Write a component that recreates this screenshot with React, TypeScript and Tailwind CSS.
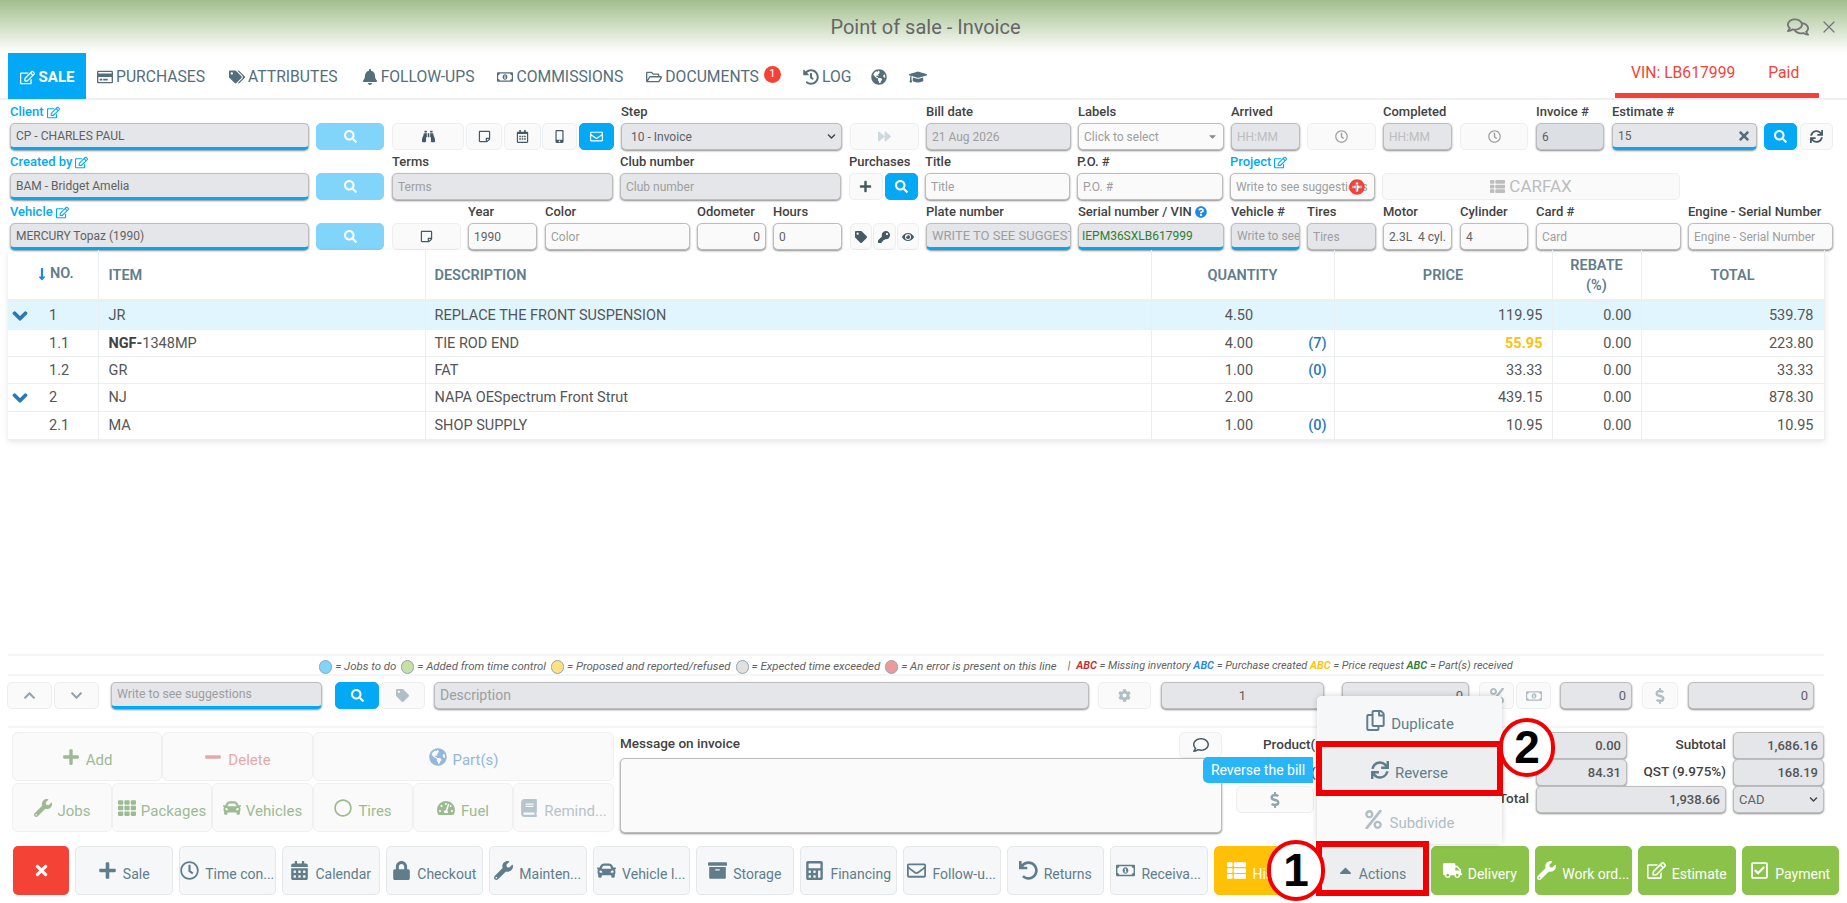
import React from "react";
import { X } from "lucide-react";
import {
  FaRegEdit, FaRegCreditCard, FaTags, FaBell, FaRegMoneyBillAlt, FaRegFolderOpen, FaHistory, FaGlobeAmericas, FaGraduationCap,
  FaSearch, FaBinoculars, FaRegStickyNote, FaRegCalendarAlt, FaMobileAlt, FaRegEnvelope, FaForward, FaRegClock, FaTimes, FaSync,
  FaPlus, FaTag, FaKey, FaEye, FaQuestionCircle, FaPlusCircle, FaChevronDown, FaChevronUp, FaCog, FaPercent, FaDollarSign,
  FaRegComment, FaRegComments, FaMinus, FaWrench, FaTh, FaCar, FaRegCircle, FaTachometerAlt, FaBook, FaLock, FaArchive, FaCalculator,
  FaUndo, FaTruck, FaRegCheckSquare, FaCaretUp, FaRegCopy, FaThList, FaCaretDown, FaLongArrowAltDown, FaCalendarAlt,
} from "react-icons/fa";

const base = "h-[27px] rounded-[5px] border border-[#bdbdbd] shadow-[0_1px_2px_rgba(0,0,0,0.45)] px-[5px] text-[12px] flex items-center overflow-hidden whitespace-nowrap";
const gray = base + " bg-[#e4e6e9]";
const white = base + " bg-[#fafafa]";
const blueLine = " border-b-[3px] border-b-[#03a9f4]";
const hint = "text-[#9e9e9e]";
const val = "text-[#616161]";

function Cell({ w, ml, label, blue, edit, children }: { w: string; ml?: string; label?: React.ReactNode; blue?: boolean; edit?: boolean; children: React.ReactNode }) {
  return (
    <div className={`flex flex-col shrink-0 ${w} ${ml ?? ""}`}>
      <div className={`h-[20px] pb-[2px] flex items-center gap-[3px] whitespace-nowrap text-[13px] font-medium ${blue ? "text-[#03a9f4]" : "text-[#424242]"}`}>
        {label}
        {edit && <FaRegEdit className="text-[13px]" />}
      </div>
      {children}
    </div>
  );
}

function Btn({ className, children }: { className?: string; children?: React.ReactNode }) {
  return (
    <div className={`h-[27px] rounded-[5px] border border-[#eceff1] bg-[#fafafa] flex items-center justify-center text-[#455a64] text-[13px] ${className ?? ""}`}>
      {children}
    </div>
  );
}

const lightSearch = "!bg-[#81d4fa] !border-[#81d4fa] !text-white";
const blueBtn = "!bg-[#03a9f4] !border-[#03a9f4] !text-white";

function Tab({ icon, text, className }: { icon: React.ReactNode; text: string; className?: string }) {
  return (
    <div className={`flex items-center gap-[3px] pt-[3px] text-[15.7px] text-[#546e7a] whitespace-nowrap ${className ?? ""}`}>
      <span className="text-[16px]">{icon}</span>
      {text}
    </div>
  );
}

const rows = [
  { no: "1", chev: true, item: <>JR</>, desc: "REPLACE THE FRONT SUSPENSION", qty: "4.50", badge: "", price: "119.95", total: "539.78", h: "h-[29px]", bg: "bg-[#e1f5fe]" },
  { no: "1.1", item: <><b className="font-bold text-[#424242]">NGF-</b>1348MP</>, desc: "TIE ROD END", qty: "4.00", badge: "(7)", price: "55.95", total: "223.80", h: "h-[27px]", yellow: true },
  { no: "1.2", item: <>GR</>, desc: "FAT", qty: "1.00", badge: "(0)", price: "33.33", total: "33.33", h: "h-[27px]" },
  { no: "2", chev: true, item: <>NJ</>, desc: "NAPA OESpectrum Front Strut", qty: "2.00", badge: "", price: "439.15", total: "878.30", h: "h-[28px]" },
  { no: "2.1", item: <>MA</>, desc: "SHOP SUPPLY", qty: "1.00", badge: "(0)", price: "10.95", total: "10.95", h: "h-[28px]" },
];

const th = "border-r border-[#eceff1] pt-[3px] text-[14.5px] font-semibold text-[#607d8b] uppercase";
const td = "border-r border-[#eceff1] pt-[2px] text-[14.5px] text-[#555]";

function Legend({ c, t }: { c: string; t: string }) {
  return (
    <span className="inline-flex items-center gap-[3px] mr-[5px] text-[11.4px]">
      <span className={`w-[13px] h-[14px] rounded-full border border-[#90a4ae] ${c}`} />
      <span>{t}</span>
    </span>
  );
}

function Tool({ className, icon, text, tc }: { className: string; icon: React.ReactNode; text: string; tc: string }) {
  return (
    <div className={`h-[49px] pt-[8px] rounded-[6px] border border-[#f0f0f0] bg-[#fafafa] flex items-center justify-center gap-[6px] text-[15px] whitespace-nowrap ${className} ${tc}`}>
      <span className="text-[18px] -mt-[8px]">{icon}</span>
      {text}
    </div>
  );
}

function Bar({ icon, text, className }: { icon: React.ReactNode; text: string; className?: string }) {
  return (
    <div className={`w-[97.5px] h-[49px] pt-[8px] shrink-0 rounded-[5px] border flex items-center justify-center gap-[6px] text-[14px] whitespace-nowrap overflow-hidden ${className ?? "border-[#e3e8eb] bg-[#f5f7f8] text-[#607d8b]"}`}>
      <span className="text-[19px] -mt-[8px]">{icon}</span>
      {text}
    </div>
  );
}

const green = "border-[#8bc34a] bg-[#8bc34a] text-white";
const right = "justify-end font-medium text-[13px] text-[#555]";

export default function App() {
  return (
    <div className="relative w-[1847px] h-[903px] overflow-hidden bg-white flex flex-col font-[Roboto,sans-serif]">
      {/* Title */}
      <header className="h-[53px] shrink-0 bg-linear-to-b from-[#a3bf8c] to-white grid grid-cols-[1fr_auto_1fr] items-center">
        <div />
        <h1 className="text-[20px] text-[#666] font-normal pl-[4px]">Point of sale - Invoice</h1>
        <div className="flex items-center justify-end gap-[10px] pr-[8px] text-[#757575]">
          <FaRegComments className="text-[22px]" />
          <X size={20} strokeWidth={1.5} />
        </div>
      </header>

      {/* Tabs */}
      <nav className="h-[47px] shrink-0 flex border-b-2 border-[#f0f0f0] pl-[8px]">
        <div className="w-[78px] h-[46px] pt-[3px] bg-[#03a9f4] text-white font-bold text-[15px] flex items-center justify-center gap-[4px]">
          <FaRegEdit className="text-[15px]" /> SALE
        </div>
        <Tab className="ml-[11px]" icon={<FaRegCreditCard />} text="PURCHASES" />
        <Tab className="ml-[24px]" icon={<FaTags />} text="ATTRIBUTES" />
        <Tab className="ml-[24px]" icon={<FaBell />} text="FOLLOW-UPS" />
        <Tab className="ml-[23px]" icon={<FaRegMoneyBillAlt />} text="COMMISSIONS" />
        <Tab className="ml-[23px]" icon={<FaRegFolderOpen />} text="DOCUMENTS" />
        <span className="ml-[5px] mt-[13px] w-[17px] h-[17px] rounded-full bg-[#f44336] text-white text-[11px] flex items-center justify-center">1</span>
        <Tab className="ml-[22px]" icon={<FaHistory />} text="LOG" />
        <Tab className="ml-[20px]" icon={<FaGlobeAmericas />} text="" />
        <Tab className="ml-[22px]" icon={<FaGraduationCap className="text-[18px]" />} text="" />
        <div className="ml-auto mr-[28px] w-[204px] h-[45px] border-b-[5px] border-[#f44336] flex items-center text-[15.7px] text-[#f44336] pl-[16px] gap-[33px]">
          <span>VIN: LB617999</span>
          <span>Paid</span>
        </div>
      </nav>

      {/* Form */}
      <section className="shrink-0 pl-[10px] pt-[3px] flex flex-col gap-[3px]">
        <div className="flex">
          <Cell w="w-[299px]" label="Client" blue edit><div className={gray + blueLine + " " + val}>CP - CHARLES PAUL</div></Cell>
          <Cell w="w-[68px]" ml="ml-[7px]"><Btn className={lightSearch}><FaSearch /></Btn></Cell>
          <Cell w="w-[72px]" ml="ml-[8px]"><Btn><FaBinoculars /></Btn></Cell>
          <Cell w="w-[36px]" ml="ml-[2px]"><Btn><FaRegStickyNote /></Btn></Cell>
          <Cell w="w-[37px]" ml="ml-[2px]"><Btn><FaRegCalendarAlt /></Btn></Cell>
          <Cell w="w-[35px]" ml="ml-[1px]"><Btn><FaMobileAlt /></Btn></Cell>
          <Cell w="w-[35px]" ml="ml-[2px]"><Btn className={blueBtn}><FaRegEnvelope /></Btn></Cell>
          <Cell w="w-[221px]" ml="ml-[7px]" label="Step"><div className={gray + " justify-between pl-[9px] " + val}>10 - Invoice<FaChevronDown className="text-[9px] text-[#444]" /></div></Cell>
          <Cell w="w-[69px]" ml="ml-[8px]"><Btn className="!text-[#cfd8dc]"><FaForward /></Btn></Cell>
          <Cell w="w-[145px]" ml="ml-[7px]" label="Bill date"><div className={gray + " " + hint}>21 Aug 2026</div></Cell>
          <Cell w="w-[146px]" ml="ml-[7px]" label="Labels"><div className={white + " justify-between " + hint}>Click to select<FaCaretDown className="text-[11px] text-[#888]" /></div></Cell>
          <Cell w="w-[69px]" ml="ml-[7px]" label="Arrived"><div className={gray + " text-[#bdbdbd]"}>HH:MM</div></Cell>
          <Cell w="w-[69px]" ml="ml-[7px]"><Btn className="!text-[#9e9e9e]"><FaRegClock /></Btn></Cell>
          <Cell w="w-[69px]" ml="ml-[7px]" label="Completed"><div className={gray + " text-[#bdbdbd]"}>HH:MM</div></Cell>
          <Cell w="w-[68px]" ml="ml-[8px]"><Btn className="!text-[#9e9e9e]"><FaRegClock /></Btn></Cell>
          <Cell w="w-[68px]" ml="ml-[8px]" label="Invoice #"><div className={base + " bg-[#dcdfe3] " + val}>6</div></Cell>
          <Cell w="w-[145px]" ml="ml-[8px]" label="Estimate #"><div className={gray + blueLine + " justify-between " + val}>15<FaTimes className="text-[14px] text-[#546e7a]" /></div></Cell>
          <Cell w="w-[33px]" ml="ml-[7px]"><Btn className={blueBtn}><FaSearch /></Btn></Cell>
          <Cell w="w-[33px]" ml="ml-[3px]"><Btn><FaSync /></Btn></Cell>
        </div>

        <div className="flex">
          <Cell w="w-[299px]" label="Created by" blue edit><div className={gray + blueLine + " " + val}>BAM - Bridget Amelia</div></Cell>
          <Cell w="w-[68px]" ml="ml-[7px]"><Btn className={lightSearch}><FaSearch /></Btn></Cell>
          <Cell w="w-[221px]" ml="ml-[8px]" label="Terms"><div className={gray + " " + hint}>Terms</div></Cell>
          <Cell w="w-[221px]" ml="ml-[7px]" label="Club number"><div className={gray + " " + hint}>Club number</div></Cell>
          <Cell w="w-[69px]" ml="ml-[8px]" label="Purchases">
            <div className="flex gap-[2px]"><Btn className="flex-1"><FaPlus /></Btn><Btn className={"flex-1 " + blueBtn}><FaSearch /></Btn></div>
          </Cell>
          <Cell w="w-[145px]" ml="ml-[7px]" label="Title"><div className={white + " " + hint}>Title</div></Cell>
          <Cell w="w-[146px]" ml="ml-[7px]" label="P.O. #"><div className={white + " " + hint}>P.O. #</div></Cell>
          <Cell w="w-[145px]" ml="ml-[7px]" label="Project" blue edit>
            <div className={white + " relative " + hint}>Write to see suggestions
              <FaPlusCircle className="absolute right-[9px] top-[5px] text-[16px] text-[#f44336]" />
            </div>
          </Cell>
          <Cell w="w-[298px]" ml="ml-[7px]"><Btn className="!text-[#bdbdbd] gap-[4px] !text-[17px]"><FaThList className="text-[15px]" />CARFAX</Btn></Cell>
        </div>

        <div className="flex">
          <Cell w="w-[299px]" label="Vehicle" blue edit><div className={gray + blueLine + " " + val}>MERCURY Topaz (1990)</div></Cell>
          <Cell w="w-[68px]" ml="ml-[7px]"><Btn className={lightSearch}><FaSearch /></Btn></Cell>
          <Cell w="w-[69px]" ml="ml-[8px]"><Btn><FaRegStickyNote /></Btn></Cell>
          <Cell w="w-[69px]" ml="ml-[7px]" label="Year"><div className={white + " " + val}>1990</div></Cell>
          <Cell w="w-[145px]" ml="ml-[8px]" label="Color"><div className={white + " " + hint}>Color</div></Cell>
          <Cell w="w-[69px]" ml="ml-[7px]" label="Odometer"><div className={white + " justify-end " + val}>0</div></Cell>
          <Cell w="w-[69px]" ml="ml-[7px]" label="Hours"><div className={white + " " + val}>0</div></Cell>
          <Cell w="w-[69px]" ml="ml-[8px]">
            <div className="flex gap-[1px]">
              <Btn className="flex-1 !text-[12px]"><FaTag /></Btn>
              <Btn className="flex-1 !text-[12px]"><FaKey /></Btn>
              <Btn className="flex-1 !text-[12px]"><FaEye /></Btn>
            </div>
          </Cell>
          <Cell w="w-[145px]" ml="ml-[7px]" label="Plate number"><div className={gray + blueLine + " !text-[13px] " + hint}>WRITE TO SEE SUGGESTIONS</div></Cell>
          <Cell w="w-[146px]" ml="ml-[7px]" label={<>Serial number / VIN <FaQuestionCircle className="text-[12px] text-[#1e88e5]" /></>}><div className={gray + blueLine + " text-[#2e7d32] !px-[3px]"}>IEPM36SXLB617999</div></Cell>
          <Cell w="w-[69px]" ml="ml-[7px]" label="Vehicle #"><div className={gray + blueLine + " " + hint}>Write to see suggestions</div></Cell>
          <Cell w="w-[69px]" ml="ml-[7px]" label="Tires"><div className={gray + " " + hint}>Tires</div></Cell>
          <Cell w="w-[69px]" ml="ml-[7px]" label="Motor"><div className={white + " " + val}>2.3L&nbsp; 4 cyl.</div></Cell>
          <Cell w="w-[68px]" ml="ml-[8px]" label="Cylinder"><div className={white + " " + val}>4</div></Cell>
          <Cell w="w-[145px]" ml="ml-[8px]" label="Card #"><div className={white + " " + hint}>Card</div></Cell>
          <Cell w="w-[145px]" ml="ml-[7px]" label="Engine - Serial Number"><div className={white + " " + hint}>Engine - Serial Number</div></Cell>
        </div>
      </section>

      {/* Table */}
      <div className="flex-1 min-h-0 pl-[8px]">
        <table className="w-[1816px] table-fixed border-collapse shadow-[0_2px_6px_rgba(0,0,0,0.1)]">
          <colgroup>
            <col className="w-[90px]" /><col className="w-[327px]" /><col className="w-[726px]" /><col className="w-[183px]" /><col className="w-[218px]" /><col className="w-[89px]" /><col className="w-[183px]" />
          </colgroup>
          <thead>
            <tr className="h-[50px] border-b-[3px] border-[#eceff1]">
              <th className={th + " pl-[27px] text-left"}><span className="inline-flex items-center gap-[1px]"><FaLongArrowAltDown className="text-[#1e88e5] text-[14px]" />NO.</span></th>
              <th className={th + " text-left pl-[10px]"}>ITEM</th>
              <th className={th + " text-left pl-[9px]"}>DESCRIPTION</th>
              <th className={th}>QUANTITY</th>
              <th className={th}>PRICE</th>
              <th className={th + " leading-[20px]"}>REBATE<br />(%)</th>
              <th className={th}>TOTAL</th>
            </tr>
          </thead>
          <tbody>
            {rows.map((r) => (
              <tr key={r.no} className={`${r.h} border-b border-[#eceff1] ${r.bg ?? ""}`}>
                <td className={td}>
                  <div className="flex items-center pl-[4px]">
                    <span className="w-[22px]">{r.chev && <FaChevronDown className="text-[#2a78b8] text-[16px] stroke-[40]" />}</span>
                    <span className="ml-[15px]">{r.no}</span>
                  </div>
                </td>
                <td className={td + " pl-[10px]"}>{r.item}</td>
                <td className={td + " pl-[9px]"}>{r.desc}</td>
                <td className={td}>
                  <div className="grid grid-cols-[1fr_auto_1fr] pr-[7px]">
                    <span />
                    <span>{r.qty}</span>
                    <span className="text-right font-medium text-[#2a78b8]">{r.badge}</span>
                  </div>
                </td>
                <td className={td + " text-right pr-[9px] " + (r.yellow ? "!text-[#ffc107] font-bold" : "")}>{r.price}</td>
                <td className={td + " text-right pr-[9px]"}>0.00</td>
                <td className={td + " text-right pr-[10px]"}>{r.total}</td>
              </tr>
            ))}
          </tbody>
        </table>
      </div>

      {/* Bottom */}
      <section className="h-[249px] shrink-0 flex flex-col">
        <div className="ml-[8px] mr-[23px] h-[22px] pt-[3px] border-y-2 border-[#f5f5f5] flex items-center justify-center italic text-[10.9px] text-[#616161] whitespace-nowrap">
          <Legend c="bg-[#81d4fa]" t="= Jobs to do" />
          <Legend c="bg-[#c5e1a5]" t="= Added from time control" />
          <Legend c="bg-[#ffe082]" t="= Proposed and reported/refused" />
          <Legend c="bg-[#e0e0e0]" t="= Expected time exceeded" />
          <Legend c="bg-[#ef9a9a]" t="= An error is present on this line" />
          <span className="mx-[6px]">|</span>
          <b className="text-[#c62828] font-semibold">ABC</b>&nbsp;= Missing inventory&nbsp;
          <b className="text-[#1e88e5] font-semibold">ABC</b>&nbsp;= Purchase created&nbsp;
          <b className="text-[#ffc107] font-semibold">ABC</b>&nbsp;= Price request&nbsp;
          <b className="text-[#2e7d32] font-semibold">ABC</b>&nbsp;= Part(s) received
        </div>

        <div className="flex items-center mt-[6px] pl-[7px] h-[27px]">
          <Btn className="w-[45px] !text-[#90a4ae]"><FaChevronUp /></Btn>
          <Btn className="w-[45px] ml-[2px] !text-[#90a4ae]"><FaChevronDown /></Btn>
          <div className={gray + blueLine + " w-[211px] ml-[12px] !text-[12.3px] " + hint}>Write to see suggestions</div>
          <Btn className={"w-[44px] ml-[13px] " + blueBtn}><FaSearch /></Btn>
          <Btn className="w-[45px] ml-[1px] !text-[#b0bec5]"><FaTag /></Btn>
          <div className={gray + " w-[655px] ml-[9px] !text-[14px] " + hint}>Description</div>
          <Btn className="w-[53px] ml-[9px] !text-[#b0bec5]"><FaCog /></Btn>
          <div className={gray + " w-[163px] ml-[10px] justify-center !text-[13px] " + val}>1</div>
          <div className={gray + " w-[127px] ml-[18px] justify-end !text-[13px] " + val}>0</div>
          <Btn className="w-[35px] ml-[10px] !text-[#b0bec5] !text-[16px]"><FaPercent /></Btn>
          <Btn className="w-[35px] ml-[2px] !text-[#b0bec5] !text-[16px]"><FaRegMoneyBillAlt /></Btn>
          <div className={gray + " w-[72px] ml-[9px] justify-end !text-[13px] " + val}>0</div>
          <Btn className="w-[36px] ml-[10px] !text-[#b0bec5] !text-[16px]"><FaDollarSign /></Btn>
          <div className={gray + " w-[126px] ml-[10px] justify-end !text-[13px] " + val}>0</div>
        </div>

        <div className="ml-[8px] mr-[23px] mt-[17px] border-t-2 border-[#f5f5f5]" />

        <div className="flex mt-[4px] pl-[12px]">
          <div className="w-[602px] shrink-0 flex flex-col gap-[2px]">
            <div className="flex">
              <Tool className="w-[150px]" tc="text-[#9cbb92]" icon={<FaPlus />} text="Add" />
              <Tool className="w-[151px]" tc="text-[#e3a9a9]" icon={<FaMinus />} text="Delete" />
              <Tool className="w-[301px]" tc="text-[#93b8dc]" icon={<FaGlobeAmericas />} text="Part(s)" />
            </div>
            <div className="flex">
              <Tool className="w-[100px]" tc="text-[#9cbb92]" icon={<FaWrench />} text="Jobs" />
              <Tool className="w-[100px] !gap-[5px]" tc="text-[#9cbb92]" icon={<FaTh />} text="Packages" />
              <Tool className="w-[101px] !gap-[5px]" tc="text-[#9cbb92]" icon={<FaCar />} text="Vehicles" />
              <Tool className="w-[100px]" tc="text-[#9cbb92]" icon={<FaRegCircle />} text="Tires" />
              <Tool className="w-[100px]" tc="text-[#9cbb92]" icon={<FaTachometerAlt />} text="Fuel" />
              <Tool className="w-[101px]" tc="text-[#b6c4cc]" icon={<FaBook />} text="Remind..." />
            </div>
          </div>

          <div className="w-[602px] shrink-0 ml-[6px] flex flex-col">
            <div className="h-[26px] flex items-center justify-between">
              <span className="text-[13.5px] font-medium text-[#424242] pb-[3px]">Message on invoice</span>
              <Btn className="w-[43px] !h-[26px] !text-[16px]"><FaRegComment /></Btn>
            </div>
            <div className="h-[75px] rounded-[5px] border border-[#bdbdbd] bg-[#fafafa] shadow-[0_1px_2px_rgba(0,0,0,0.45)]" />
          </div>

          <div className="flex-1 ml-[14px] flex flex-col text-[13.5px] text-[#424242] font-medium">
            <div className="flex items-center h-[27px]">
              <span className="ml-[27px] pb-[3px]">Product(s)</span>
              <div className={gray + " " + right + " !text-[13px] w-[91px] ml-auto"}>0.00</div>
              <span className="w-[106px] text-right pr-[7px] pb-[3px]">Subtotal</span>
              <div className={gray + " " + right + " !text-[13px] w-[91px] mr-[23px]"}>1,686.16</div>
            </div>
            <div className="flex items-center h-[27px]">
              <span className="ml-[27px]">Service (5%)</span>
              <div className={gray + " " + right + " !text-[13px] w-[91px] ml-auto"}>84.31</div>
              <span className="w-[106px] text-right pr-[7px] pb-[3px]">QST (9.975%)</span>
              <div className={gray + " " + right + " !text-[13px] w-[91px] mr-[23px]"}>168.19</div>
            </div>
            <div className="flex items-center h-[27px]">
              <Btn className="w-[78px] !text-[#90a4ae] !text-[16px]"><FaDollarSign /></Btn>
              <span className="ml-auto pr-[7px] pb-[3px]">Total</span>
              <div className={gray + " " + right + " !text-[13px] w-[190px]"}>1,938.66</div>
              <div className={gray + " w-[91px] ml-[7px] mr-[23px] justify-between font-normal text-[#616161] !text-[13px]"}>CAD<FaChevronDown className="text-[9px] text-[#444]" /></div>
            </div>
          </div>
        </div>

        <div className="flex gap-[6px] mt-[13px] pl-[13px]">
          <div className="w-[56px] h-[49px] shrink-0 rounded-[5px] bg-[#f44336] flex items-center justify-center text-white text-[17px]"><FaTimes /></div>
          <Bar icon={<FaPlus />} text="Sale" />
          <Bar icon={<FaRegClock />} text="Time con..." />
          <Bar icon={<FaCalendarAlt />} text="Calendar" />
          <Bar icon={<FaLock />} text="Checkout" />
          <Bar icon={<FaWrench />} text="Mainten..." />
          <Bar icon={<FaCar />} text="Vehicle l..." />
          <Bar icon={<FaArchive />} text="Storage" />
          <Bar icon={<FaCalculator />} text="Financing" />
          <Bar icon={<FaRegEnvelope />} text="Follow-u..." />
          <Bar icon={<FaUndo />} text="Returns" />
          <Bar icon={<FaRegMoneyBillAlt />} text="Receiva..." />
          <Bar className="border-[#ffc107] bg-[#ffc107] text-white" icon={<FaThList />} text="History" />
          <Bar className="!w-[108px] border-[#e3e8eb] bg-[#eceef0] text-[#607d8b] !gap-[4px]" icon={<FaCaretUp />} text="Actions" />
          <Bar className={green} icon={<FaTruck />} text="Delivery" />
          <Bar className={green} icon={<FaWrench />} text="Work ord..." />
          <Bar className={green} icon={<FaRegEdit />} text="Estimate" />
          <Bar className={green} icon={<FaRegCheckSquare />} text="Payment" />
        </div>
      </section>

      {/* Actions menu */}
      <div className="absolute left-[1317px] top-[696px] w-[185px] h-[148px] rounded-[5px] bg-white shadow-[0_0_6px_rgba(0,0,0,0.18)] flex flex-col text-[15px] text-[#607d8b]">
        <div className="flex-1 flex items-center justify-center gap-[5px] pt-[7px] bg-[#f5f7f8] rounded-t-[5px]"><FaRegCopy className="text-[21px] -mt-[7px]" />Duplicate</div>
        <div className="flex-1 flex items-center justify-center gap-[6px] pt-[7px] bg-[#eceef0]"><FaSync className="text-[18px] -mt-[7px]" />Reverse</div>
        <div className="flex-1 flex items-center justify-center gap-[6px] pt-[7px] bg-[#fafafa] text-[#b0bec5]"><FaPercent className="text-[19px] -mt-[7px]" />Subdivide</div>
      </div>

      {/* Tooltip */}
      <div className="absolute left-[1203px] top-[757px] w-[110px] h-[26px] rounded-l-[5px] bg-[#29b6f6] text-white text-[14px] flex items-center justify-center">Reverse the bill</div>

      {/* Annotations */}
      <div className="absolute left-[1316px] top-[741px] w-[187px] h-[55px] border-[6px] border-[#f00000]" />
      <div className="absolute left-[1316px] top-[841px] w-[113px] h-[55px] border-[6px] border-[#f00000]" />
      <div className="absolute left-[1499px] top-[718px] w-[56px] h-[59px] rounded-full border-[4px] border-[#f00000] bg-white flex items-center justify-center text-[46px] font-bold text-black font-['Liberation_Sans',sans-serif]">2</div>
      <div className="absolute left-[1267px] top-[840px] w-[58px] h-[61px] rounded-full border-[4px] border-[#f00000] bg-white flex items-center justify-center text-[46px] font-bold text-black font-['Liberation_Sans',sans-serif]">1</div>
    </div>
  );
}
